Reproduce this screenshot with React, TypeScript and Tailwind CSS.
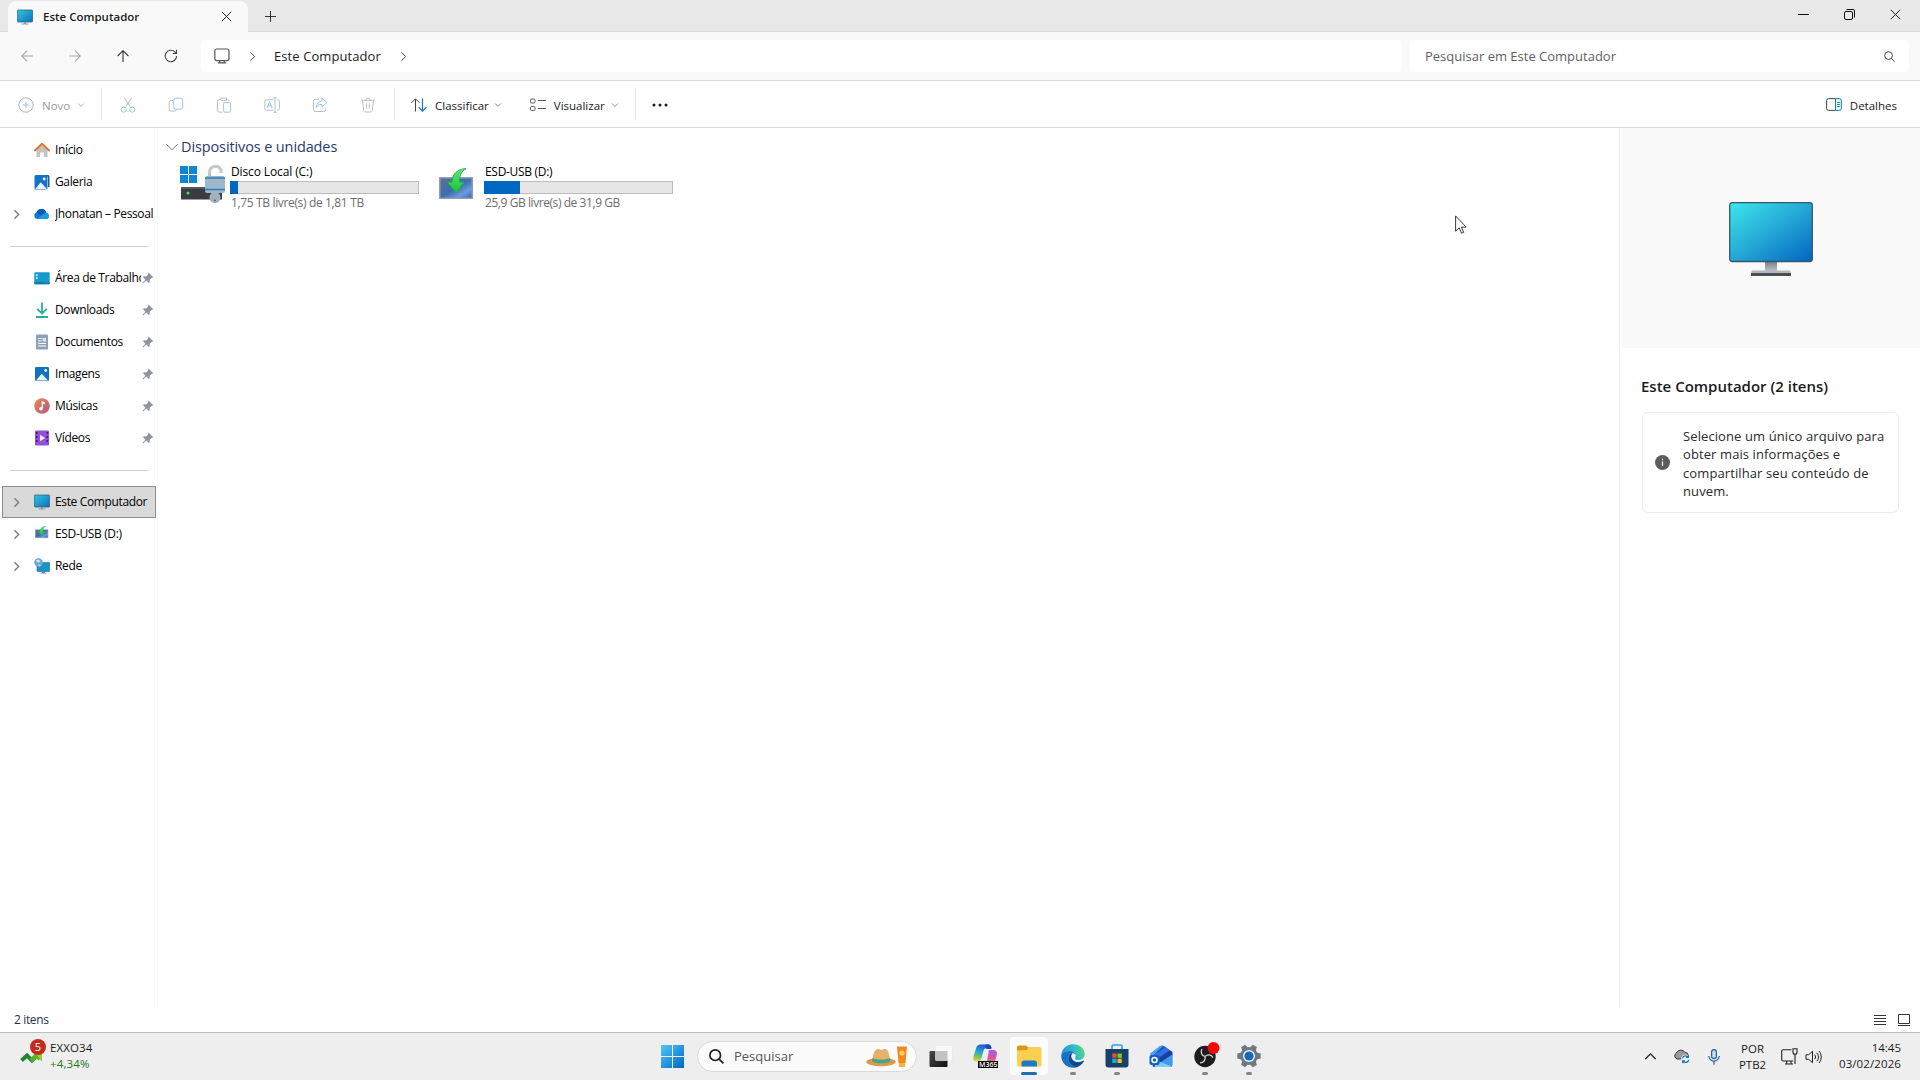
import type { ReactNode } from 'react'

interface IconProps {
  className?: string
}

interface Drive {
  name: string
  free: string
  fill: number
  nameClass: string
  freeClass: string
  icon: ReactNode
}

interface NavItem {
  label: string
  icon: ReactNode
  chevron?: boolean
  pinned?: boolean
  selected?: boolean
}

export default function App() {
  return (
    <div className="relative flex h-[1080px] w-[1920px] flex-col overflow-hidden bg-white font-['Open_Sans','Noto_Sans',sans-serif] text-xs text-[#1b1b1b]">
      <TitleBar />
      <NavBar />
      <CommandBar />
      <div className="flex min-h-0 flex-1">
        <Sidebar />
        <Drives />
        <DetailsPane />
      </div>
      <StatusBar />
      <Taskbar />
      <Cursor className="absolute left-[1455px] top-[215px] h-5 w-3" />
    </div>
  )
}

function TitleBar() {
  return (
    <header className="flex h-8 shrink-0 items-end border-b border-[#d9d9d9] bg-[#e8e8e8]">
      <div className="-mb-px ml-2 flex h-[31px] w-60 items-center rounded-t-lg bg-[#f9f9f9] pl-[9px] pr-4">
        <MonitorIcon className="h-4 w-4" />
        <span className="ml-[10px] text-[11.5px] font-semibold">Este Computador</span>
        <CloseIcon className="ml-auto h-[11px] w-[11px]" />
      </div>
      <svg viewBox="0 0 11 11" className="mb-[9px] ml-[17px] h-[11px] w-[11px]" fill="none" stroke="#333">
        <path d="M5.5 0v11M0 5.5h11" />
      </svg>
      <div className="mb-[11px] ml-auto flex items-center gap-[35px] pr-[19px]">
        <svg viewBox="0 0 11 11" className="h-[11px] w-[11px]" fill="none" stroke="#111">
          <path d="M0 5.5h11" />
        </svg>
        <svg viewBox="0 0 11 11" className="h-[11px] w-[11px]" fill="none" stroke="#111">
          <rect x="0.5" y="2.5" width="8" height="8" rx="1.5" />
          <path d="M2.5 0.5H9a1.5 1.5 0 0 1 1.5 1.5v6.5" />
        </svg>
        <CloseIcon className="h-[11px] w-[11px]" />
      </div>
    </header>
  )
}

function NavBar() {
  return (
    <div className="flex h-[49px] shrink-0 items-center border-b border-[#d9d9d9] bg-[#f9f9f9] pl-[3px] pr-[11px]">
      <NavArrow color="#a8a8a8" className="" />
      <NavArrow color="#a8a8a8" className="rotate-180" />
      <NavArrow color="#333" className="rotate-90" />
      <div className="flex w-12 justify-center">
        <svg viewBox="0 0 14 14" className="h-[14px] w-[14px]" fill="none" stroke="#444" strokeWidth="1.1">
          <path d="M12.6 7a5.7 5.7 0 1 1-1.7-4.1L12.3 4.4M12.5 0.8v3.7H8.8" />
        </svg>
      </div>
      <div className="ml-[6px] flex h-8 w-[1201px] items-center rounded bg-white pl-[13px]">
        <svg viewBox="0 0 16 16" className="h-4 w-4" fill="none" stroke="#555" strokeWidth="1.2">
          <rect x="0.8" y="1" width="14.2" height="11.6" rx="2" />
          <path d="M5.7 12.6v2M10.2 12.6v2M3.8 14.9h8.4" />
        </svg>
        <Chevron className="ml-[18px] h-[9px] w-[9px] -rotate-90" color="#444" />
        <span className="ml-[17px] pt-[2px] text-[13px] tracking-[0.08px]">Este Computador</span>
        <Chevron className="ml-[18px] h-[9px] w-[9px] -rotate-90" color="#444" />
      </div>
      <div className="ml-2 flex h-8 w-[499px] items-center justify-between rounded bg-white pl-[15px] pr-[14px] text-[#616161]">
        <span className="pt-[2px] text-[13px]">Pesquisar em Este Computador</span>
        <SearchIcon className="h-[11px] w-[11px]" color="#444" width={1} />
      </div>
    </div>
  )
}

function NavArrow({ color, className }: { color: string; className: string }) {
  return (
    <div className="flex w-12 justify-center">
      <svg viewBox="0 0 12 12" className={`h-3 w-3 ${className}`} fill="none" stroke={color} strokeWidth="1.1">
        <path d="M12 6H0.7M6 0.6L0.7 6L6 11.4" />
      </svg>
    </div>
  )
}

function CommandBar() {
  return (
    <div className="flex h-[47px] shrink-0 items-center border-b border-[#d9d9d9] bg-white pt-[2px]">
      <div className="flex w-[101px] items-center pl-[18px] text-[#9b9b9b]">
        <svg viewBox="0 0 16 16" className="h-4 w-4" fill="none">
          <circle cx="8" cy="8" r="7.2" stroke="#b3b3b3" />
          <path d="M8 4.5v7M4.5 8h7" stroke="#9cc3e6" />
        </svg>
        <span className="ml-2 pt-[2px] text-[11.5px]">Novo</span>
        <Chevron className="ml-[8px] h-[6px] w-[6px]" color="#b0b0b0" />
      </div>
      <Divider />
      <div className="ml-[2px] flex">
        <Tool>
          <path d="M4.2 0.6L10.8 10.8M11.8 0.6L5.2 10.8" stroke="#bdbdbd" />
          <circle cx="3.7" cy="12.6" r="2.6" stroke="#9cc3e6" />
          <circle cx="12.3" cy="12.6" r="2.6" stroke="#9cc3e6" />
        </Tool>
        <Tool>
          <path d="M5 3.5H3.2a2 2 0 0 0-2 2v6.6a2 2 0 0 0 2 2h3.6a2 2 0 0 0 1.7-1.2" stroke="#bdbdbd" />
          <rect x="5.7" y="1.2" width="9" height="11" rx="2" stroke="#9cc3e6" />
        </Tool>
        <Tool>
          <path d="M5 2.5H3.2a1.8 1.8 0 0 0-1.8 1.8v9a1.8 1.8 0 0 0 1.8 1.8h3M10.5 2.5h.8a1.8 1.8 0 0 1 1.8 1.2M5 1h5.5v2.6H5z" stroke="#bdbdbd" />
          <rect x="7.6" y="5.4" width="7" height="9.8" rx="1.5" stroke="#9cc3e6" />
        </Tool>
        <Tool>
          <path d="M9 2.8H2.6A1.8 1.8 0 0 0 .8 4.6v6.8a1.8 1.8 0 0 0 1.8 1.8H9M13 2.8h.6a1.8 1.8 0 0 1 1.8 1.8v6.8a1.8 1.8 0 0 1-1.8 1.8H13" stroke="#bdbdbd" />
          <path d="M11 .8v14.4M9.4.8h3.2M9.4 15.2h3.2M3 11l2.6-6.4L8.2 11M4 9h3.3" stroke="#9cc3e6" />
        </Tool>
        <Tool>
          <path d="M7 2.3H3.4a2 2 0 0 0-2 2v8.2a2 2 0 0 0 2 2h8.4a2 2 0 0 0 2-2v-1.2" stroke="#bdbdbd" />
          <path d="M10 1.2l5 4.3-5 4.3V7.5c-2.7-.2-4.3.8-5.7 2.8.3-3.2 2.2-5.9 5.7-6.4z" stroke="#9cc3e6" strokeLinejoin="round" />
        </Tool>
        <Tool>
          <path d="M1 3.3h14M5.9 3.3a2.1 2.1 0 0 1 4.2 0M2.5 3.3l1.2 10.2a1.7 1.7 0 0 0 1.7 1.5h5.2a1.7 1.7 0 0 0 1.7-1.5l1.2-10.2M6.6 6.5v5M9.4 6.5v5" stroke="#bdbdbd" />
        </Tool>
      </div>
      <Divider className="ml-[2px]" />
      <svg viewBox="0 0 16 14" className="ml-4 h-[14px] w-4" fill="none">
        <path d="M4.5 13.5V1M0.5 4.8L4.5.8l4 4" stroke="#444" />
        <path d="M11.5.5V13M7.5 9.2l4 4 4-4" stroke="#1874b8" strokeWidth="1.2" />
      </svg>
      <span className="ml-2 pt-[2px] text-[11.5px]">Classificar</span>
      <Chevron className="ml-[6px] h-[6px] w-[6px]" color="#8a8a8a" />
      <svg viewBox="0 0 16 14" className="ml-[29px] h-[14px] w-4" fill="none" stroke="#555">
        <rect x="0.5" y="1" width="4.5" height="4" rx="1.2" />
        <rect x="0.5" y="8.5" width="4.5" height="4" rx="1.2" />
        <path d="M8 2.5h8M8 10.5h8" />
      </svg>
      <span className="ml-2 pt-[2px] text-[11.5px]">Visualizar</span>
      <Chevron className="ml-[7px] h-[6px] w-[6px]" color="#8a8a8a" />
      <Divider className="ml-[17px]" />
      <svg viewBox="0 0 16 4" className="ml-4 h-1 w-4" fill="#1b1b1b">
        <circle cx="2" cy="2" r="1.5" />
        <circle cx="8" cy="2" r="1.5" />
        <circle cx="14" cy="2" r="1.5" />
      </svg>
      <div className="ml-auto flex items-center pr-[23px]">
        <svg viewBox="0 0 16 13" className="h-[13px] w-4" fill="none">
          <path d="M9.5.6H2.6a2 2 0 0 0-2 2v7.8a2 2 0 0 0 2 2h6.9z" stroke="#444" />
          <path d="M9.5.6h3.9a2 2 0 0 1 2 2v7.8a2 2 0 0 1-2 2H9.5z" fill="#e3f3fb" stroke="#1a7fa8" />
          <path d="M11.2 4.5h2.6M11.2 6.5h2.6M11.2 8.5h2.6" stroke="#1a7fa8" />
        </svg>
        <span className="ml-[8px] pt-[2px] text-[11.5px]">Detalhes</span>
      </div>
    </div>
  )
}

function Tool({ children }: { children: ReactNode }) {
  return (
    <div className="flex w-12 justify-center">
      <svg viewBox="0 0 16 16" className="h-4 w-4" fill="none">
        {children}
      </svg>
    </div>
  )
}

function Divider({ className = '' }: IconProps) {
  return <div className={`-mt-[2px] h-8 w-px shrink-0 bg-[#e5e5e5] ${className}`} />
}

const places: NavItem[] = [
  { label: 'Início', icon: <HomeIcon /> },
  { label: 'Galeria', icon: <GalleryIcon /> },
  { label: 'Jhonatan – Pessoal', icon: <OneDriveIcon />, chevron: true },
]

const pinned: NavItem[] = [
  { label: 'Área de Trabalho', icon: <DesktopIcon />, pinned: true },
  { label: 'Downloads', icon: <DownloadIcon />, pinned: true },
  { label: 'Documentos', icon: <DocumentIcon />, pinned: true },
  { label: 'Imagens', icon: <PictureIcon />, pinned: true },
  { label: 'Músicas', icon: <MusicIcon />, pinned: true },
  { label: 'Vídeos', icon: <VideoIcon />, pinned: true },
]

const devices: NavItem[] = [
  { label: 'Este Computador', icon: <MonitorIcon className="h-4 w-4" />, chevron: true, selected: true },
  { label: 'ESD-USB (D:)', icon: <UsbIcon className="-mt-[2px] h-[14px] w-[14px]" />, chevron: true },
  { label: 'Rede', icon: <NetworkFolderIcon />, chevron: true },
]

function Sidebar() {
  return (
    <nav className="w-[158px] shrink-0 border-r border-[#f6f6f6] pt-[6px] text-black">
      {places.map((item) => <NavRow key={item.label} item={item} />)}
      <Separator />
      {pinned.map((item) => <NavRow key={item.label} item={item} />)}
      <Separator />
      {devices.map((item) => <NavRow key={item.label} item={item} />)}
    </nav>
  )
}

function Separator() {
  return (
    <div className="flex h-8 items-center pl-[10px]">
      <div className="h-px w-[138px] bg-[#cfcfcf]" />
    </div>
  )
}

function NavRow({ item }: { item: NavItem }) {
  return (
    <div
      className={`ml-[2px] flex h-8 w-[154px] items-center border ${
        item.selected ? 'border-[#8c8c8c] bg-[#d9d9d9]' : 'border-transparent'
      }`}
    >
      <div className="flex w-[31px] shrink-0 pl-[9px]">
        {item.chevron && <Chevron className="h-[9px] w-[9px] -rotate-90" color="#7d7d7d" width={1.4} />}
      </div>
      <div className="flex w-4 shrink-0 justify-center">{item.icon}</div>
      <div className={`ml-[5px] overflow-hidden whitespace-nowrap ${item.pinned ? 'w-[86px]' : 'w-[100px]'}`}>
        <span className="text-xs tracking-[-0.36px]">{item.label}</span>
      </div>
      {item.pinned && <PinIcon />}
    </div>
  )
}

const drives: Drive[] = [
  {
    name: 'Disco Local (C:)',
    free: '1,75 TB livre(s) de 1,81 TB',
    fill: 8,
    nameClass: 'tracking-[-0.12px]',
    freeClass: 'tracking-[-0.35px]',
    icon: <LocalDiskIcon />,
  },
  {
    name: 'ESD-USB (D:)',
    free: '25,9 GB livre(s) de 31,9 GB',
    fill: 36,
    nameClass: 'tracking-[-0.3px]',
    freeClass: 'tracking-[-0.43px]',
    icon: <UsbIcon className="ml-[5px] mt-1 h-9 w-9" />,
  },
]

function Drives() {
  return (
    <main className="flex-1 pl-2 pt-[8px]">
      <div className="flex h-[22px] items-center">
        <Chevron className="h-3 w-3" color="#777" />
        <span className="ml-[3px] text-[14.5px] tracking-[-0.12px] text-[#2b3a6b]">Dispositivos e unidades</span>
      </div>
      <div className="flex pl-[14px] pt-[5px]">
        {drives.map((drive) => (
          <div key={drive.name} className="flex w-[254px]">
            <div className="flex w-[50px] shrink-0 items-start pt-px">{drive.icon}</div>
            <div className="w-[189px]">
              <div className="flex h-[18px] items-center pb-px pl-px">
                <span className={`text-xs text-black ${drive.nameClass}`}>{drive.name}</span>
              </div>
              <div className="h-[13px] border border-[#bcbcbc] bg-[#e6e6e6]">
                <div className="-my-px -ml-px h-[13px] bg-[#0067c0]" style={{ width: drive.fill }} />
              </div>
              <div className="flex h-[18px] items-center pl-px">
                <span className={`text-xs text-[#6d6d6d] ${drive.freeClass}`}>{drive.free}</span>
              </div>
            </div>
          </div>
        ))}
      </div>
    </main>
  )
}

function DetailsPane() {
  return (
    <aside className="flex w-[301px] shrink-0 flex-col border-l border-[#f0f0f0]">
      <div className="ml-[2px] flex h-[220px] justify-center bg-[#f9f9f9] pt-[74px]">
        <BigMonitor />
      </div>
      <h2 className="mt-[26px] h-6 pl-[21px] text-[15px] font-semibold leading-6">Este Computador (2 itens)</h2>
      <div className="ml-[22px] mt-[14px] flex h-[101px] w-[257px] items-center rounded-md border border-[#ececec] pl-3">
        <InfoIcon />
        <p className="ml-[13px] pt-[2px] text-[13px] leading-[18.5px] tracking-[0.1px] text-[#2a2a2a]">
          Selecione um único arquivo para
          <br />
          obter mais informações e
          <br />
          compartilhar seu conteúdo de
          <br />
          nuvem.
        </p>
      </div>
    </aside>
  )
}

function StatusBar() {
  return (
    <div className="flex h-6 shrink-0 items-center justify-between pl-[14px] pr-[10px]">
      <span className="text-xs tracking-[-0.36px] text-[#1f3350]">2 itens</span>
      <div className="flex gap-3">
        <svg viewBox="0 0 12 12" className="h-3 w-3" stroke="#333">
          <path d="M0 1.5h12M0 4.5h12M0 7.5h12M0 10.5h12" />
        </svg>
        <svg viewBox="0 0 12 12" className="h-3 w-3" fill="none" stroke="#333">
          <path d="M.5.5h11v9H.5zM0 11.5h12" />
        </svg>
      </div>
    </div>
  )
}

function Taskbar() {
  return (
    <footer className="flex h-12 shrink-0 items-center border-t border-[#bdbdbd] bg-[#eeeeee]">
      <div className="flex w-[661px] items-center pb-[2px] pl-5">
        <StockIcon />
        <div className="ml-1 flex flex-col leading-4">
          <span className="text-[11.5px] tracking-[0.1px]">EXXO34</span>
          <span className="text-[11.5px] tracking-[0.15px] text-[#1d7a1d]">+4,34%</span>
        </div>
      </div>
      <StartIcon />
      <div className="ml-[13px] flex h-[31px] w-[220px] items-center rounded-full border border-[#dadada] bg-[#fbfbfb] pl-[11px] pr-2">
        <SearchIcon className="h-[15px] w-[15px]" color="#222" width={1.7} />
        <span className="ml-[10px] text-[13px] text-[#555]">Pesquisar</span>
        <HatIcon />
      </div>
      <div className="-mt-px ml-[2px] flex">
        <TaskItem><TaskViewIcon /></TaskItem>
        <TaskItem><CopilotIcon /></TaskItem>
        <TaskItem state="active"><ExplorerIcon /></TaskItem>
        <TaskItem state="running"><EdgeIcon /></TaskItem>
        <TaskItem state="running"><StoreIcon /></TaskItem>
        <TaskItem><OutlookIcon /></TaskItem>
        <TaskItem state="running"><ObsIcon /></TaskItem>
        <TaskItem state="running"><SettingsIcon /></TaskItem>
      </div>
      <Tray />
    </footer>
  )
}

function TaskItem({ children, state }: { children: ReactNode; state?: 'active' | 'running' }) {
  return (
    <div className="flex w-11 shrink-0 justify-center">
      <div className={`relative flex h-[38px] w-[38px] items-center justify-center rounded ${state === 'active' ? 'bg-[#fbfbfb]' : ''}`}>
        {children}
        {state === 'active' && <div className="absolute bottom-0 h-[3px] w-4 rounded-full bg-[#1c6fb5]" />}
        {state === 'running' && <div className="absolute bottom-0 h-[3px] w-[6px] rounded-full bg-[#868686]" />}
      </div>
    </div>
  )
}

function Tray() {
  return (
    <div className="ml-auto flex items-center pr-[19px]">
      <Chevron className="h-[11px] w-[11px] rotate-180" color="#222" width={1.3} />
      <svg viewBox="0 0 17 15" className="ml-[17px] h-[15px] w-[17px]">
        <path d="M4 10a3.3 3.3 0 0 1-.6-6A5 5 0 0 1 12 3.3a3.6 3.6 0 0 1 3.3 3L9 10z" fill="#9a9a9a" stroke="#333" />
        <circle cx="12.5" cy="10" r="4.5" fill="#eee" />
        <path d="M9.3 9.3a3.3 3.3 0 0 1 5.8-1.2M15.4 6v2.4H13M15.7 11a3.3 3.3 0 0 1-5.8 1.2M9.6 14.3v-2.4H12" fill="none" stroke="#0f7ac2" strokeWidth="1.2" />
      </svg>
      <svg viewBox="0 0 12 16" className="ml-[18px] h-4 w-3" fill="none" stroke="#2a5d9c" strokeWidth="1.2">
        <rect x="3.6" y="0.7" width="4.8" height="9" rx="2.4" fill="#c9def0" />
        <path d="M.8 7a5.2 5.2 0 0 0 10.4 0M6 12.2v3.5" />
      </svg>
      <div className="ml-[19px] flex w-[27px] flex-col items-center leading-4">
        <span className="text-[11.5px]">POR</span>
        <span className="text-[11.5px]">PTB2</span>
      </div>
      <svg viewBox="0 0 17 17" className="ml-[15px] h-[17px] w-[17px]" fill="none" stroke="#222" strokeWidth="1.1">
        <path d="M10.5 1.7H2.2A1.5 1.5 0 0 0 .7 3.2v8.3A1.5 1.5 0 0 0 2.2 13h10M4 16h8M5.7 13v3M10 13v3M12 .7h4v3.5a2 2 0 0 1-4 0zM14 6v10" />
      </svg>
      <svg viewBox="0 0 18 16" className="ml-[7px] h-4 w-[18px]" fill="none" stroke="#222">
        <path d="M1 5.7h2.7L7.5 2.3v11.4L3.7 10.3H1zM9.7 5.7a3.5 3.5 0 0 1 0 4.6M11.8 3.8a6 6 0 0 1 0 8.4M14 2a9 9 0 0 1 0 12" />
      </svg>
      <div className="ml-4 flex w-[62px] flex-col items-end pb-[2px] leading-4">
        <span className="text-[11.5px]">14:45</span>
        <span className="text-[11.5px] tracking-[0.1px]">03/02/2026</span>
      </div>
    </div>
  )
}

function Chevron({ className, color, width = 1 }: { className: string; color: string; width?: number }) {
  return (
    <svg viewBox="0 0 10 10" className={`shrink-0 overflow-visible ${className}`} fill="none" stroke={color} strokeWidth={width}>
      <path d="M0.3 2.7L5 7.4L9.7 2.7" vectorEffect="non-scaling-stroke" />
    </svg>
  )
}

function CloseIcon({ className }: IconProps) {
  return (
    <svg viewBox="0 0 11 11" className={className} fill="none" stroke="#222">
      <path d="M0.8 0.8l9.4 9.4M10.2 0.8L0.8 10.2" />
    </svg>
  )
}

function SearchIcon({ className, color, width }: { className: string; color: string; width: number }) {
  return (
    <svg viewBox="0 0 15 15" className={className} fill="none" stroke={color}>
      <g strokeWidth={width}>
        <circle cx="6.2" cy="6.2" r="5.3" vectorEffect="non-scaling-stroke" />
        <path d="M10.1 10.1l4.3 4.3" vectorEffect="non-scaling-stroke" />
      </g>
    </svg>
  )
}

function MonitorIcon({ className }: IconProps) {
  return (
    <svg viewBox="0 0 16 16" className={className}>
      <defs>
        <linearGradient id="mon" x1="0" y1="0" x2="1" y2="1">
          <stop offset="0" stopColor="#2fc6e2" />
          <stop offset="1" stopColor="#0f6fb8" />
        </linearGradient>
      </defs>
      <rect x="0.4" y="1" width="15.2" height="12" rx="0.8" fill="url(#mon)" stroke="#245a78" strokeWidth="0.7" />
      <path d="M7 13.2h2v1.3H7zM4.5 14.5h7v1h-7z" fill="#8a97a3" />
    </svg>
  )
}

function BigMonitor() {
  return (
    <svg viewBox="0 0 84 75" className="h-[75px] w-[84px]">
      <defs>
        <linearGradient id="screen" x1="0" y1="0" x2="1" y2="1">
          <stop offset="0" stopColor="#3ce6ea" />
          <stop offset="0.5" stopColor="#24a8d6" />
          <stop offset="1" stopColor="#0264c0" />
        </linearGradient>
        <linearGradient id="stand" x1="0" y1="0" x2="0" y2="1">
          <stop offset="0" stopColor="#7d858d" />
          <stop offset="1" stopColor="#b9c0c7" />
        </linearGradient>
      </defs>
      <path d="M36 60h12v9H36z" fill="url(#stand)" />
      <path d="M23 68.500h38l1 2.500H22z" fill="#b4b9be" />
      <path d="M22 71h40v3H22z" fill="#4a4e53" />
      <rect x="0.7" y="0.7" width="82.600" height="58.800" rx="2.500" fill="url(#screen)" stroke="#37566b" strokeWidth="1.300" />
    </svg>
  )
}

function HomeIcon() {
  return (
    <svg viewBox="0 0 16 16" className="h-4 w-4">
      <path d="M2.5 7.5L8 3l5.5 4.5V15H9.8v-4.5H6.2V15H2.5z" fill="#c3c3c6" />
      <path d="M.9 8.4L8 1.8l7.1 6.6" fill="none" stroke="#dd7a26" strokeWidth="2" strokeLinecap="round" strokeLinejoin="round" />
    </svg>
  )
}

function GalleryIcon() {
  return (
    <svg viewBox="0 0 16 16" className="h-4 w-4">
      <path d="M4 1h10a1.5 1.5 0 0 1 1.5 1.5V13H14V2.5H4z" fill="#1a5fa0" />
      <rect x="0.5" y="1" width="13" height="14.5" rx="1.5" fill="#1473c5" />
      <path d="M1.2 15l5.6-6.8L12.8 15z" fill="#eaf6ff" />
      <circle cx="10.2" cy="5" r="1.4" fill="#fff" />
    </svg>
  )
}

function OneDriveIcon() {
  return (
    <svg viewBox="0 0 16 16" className="h-4 w-4">
      <path d="M3.6 13A3.5 3.5 0 0 1 2.8 6.2 5 5 0 0 1 12.3 6.8 3.2 3.2 0 0 1 12.7 13z" fill="#0f78d4" />
      <path d="M2.8 6.2a5 5 0 0 1 9.5.6L6 9.8z" fill="#0a5cb0" />
      <path d="M3 12.7l6.2-4.5a3.2 3.2 0 0 1 3-1.4 3.2 3.2 0 0 1 .5 6.2H3.6z" fill="#1f97e4" />
    </svg>
  )
}

function DesktopIcon() {
  return (
    <svg viewBox="0 0 16 16" className="h-4 w-4">
      <rect x="0.3" y="2.3" width="15.4" height="11.9" rx="1" fill="#159bcb" />
      <path d="M0.3 12h15.4v1.2a1 1 0 0 1-1 1H1.3a1 1 0 0 1-1-1z" fill="#0d7ca8" />
      <path d="M2 4.5h1.6v1.5H2zM2 7.5h1.6V9H2zM10.5 12.8h1M12.5 12.8h1" fill="#c9f2ff" stroke="#c9f2ff" strokeWidth="0.3" />
    </svg>
  )
}

function DownloadIcon() {
  return (
    <svg viewBox="0 0 16 16" className="h-4 w-4" fill="none" stroke="#2fae8f" strokeWidth="1.8">
      <path d="M8 .5v11M3.2 6.8L8 11.5l4.8-4.7M2 15h12" />
    </svg>
  )
}

function DocumentIcon() {
  return (
    <svg viewBox="0 0 16 16" className="h-4 w-4">
      <rect x="2" y="0.5" width="12" height="15" rx="1" fill="#8ea1b8" />
      <path d="M4 4.5h3.5M4 7h3.5M4 9.5h8M4 12h8" stroke="#fff" />
      <rect x="8.6" y="4" width="3.4" height="3.5" fill="#dfe8f2" />
    </svg>
  )
}

function PictureIcon() {
  return (
    <svg viewBox="0 0 16 16" className="h-4 w-4">
      <rect x="1" y="1" width="14" height="14" rx="1.2" fill="#1173bd" />
      <path d="M2 14.5l5.700-6.800 6.300 6.800z" fill="#eaf6ff" />
      <circle cx="11.7" cy="4.5" r="1.4" fill="#fff" />
    </svg>
  )
}

function MusicIcon() {
  return (
    <svg viewBox="0 0 16 16" className="h-4 w-4">
      <defs>
        <linearGradient id="mus" x1="0" y1="0" x2="1" y2="1">
          <stop offset="0" stopColor="#e58a57" />
          <stop offset="1" stopColor="#b9567f" />
        </linearGradient>
      </defs>
      <circle cx="8" cy="8" r="7.8" fill="url(#mus)" />
      <path d="M8.300 3.500v7" stroke="#fff" strokeWidth="1.2" />
      <circle cx="6.9" cy="10.8" r="1.8" fill="#fff" />
      <path d="M8 3.300l2.800 1v1.900L8 5.300z" fill="#fff" />
    </svg>
  )
}

function VideoIcon() {
  return (
    <svg viewBox="0 0 16 16" className="h-4 w-4">
      <rect x="1" y="0.5" width="14" height="15" rx="1.2" fill="#9150d6" />
      <path d="M2.800 2v12M13.200 2v12" stroke="#41207a" strokeWidth="1.7" strokeDasharray="2 2" />
      <path d="M6 4.800l5.200 3.200L6 11.200z" fill="#f1e4ff" />
    </svg>
  )
}

function NetworkFolderIcon() {
  return (
    <svg viewBox="0 0 16 16" className="h-4 w-4">
      <rect x="3" y="4.5" width="12.7" height="9" rx="0.7" fill="#1a94c8" stroke="#1c6a92" strokeWidth="0.6" />
      <path d="M8 13.500h3v1.200h1.500v.8h-6v-.8H8z" fill="#5c88a5" />
      <circle cx="4.5" cy="4.5" r="4.2" fill="#6fa6cf" />
      <path d="M2 2.500c2-1.500 3-.5 4.500.5L4 5zM4 6.500l3 .5-1.500 1.500z" fill="#d4e8f5" />
    </svg>
  )
}

function UsbIcon({ className }: IconProps) {
  return (
    <svg viewBox="0 0 36 36" className={className}>
      <defs>
        <linearGradient id="usb" x1="0" y1="0" x2="1" y2="1">
          <stop offset="0" stopColor="#5b7391" />
          <stop offset="0.5" stopColor="#3f6cb0" />
          <stop offset="0.75" stopColor="#6a9be0" />
          <stop offset="1" stopColor="#2f62b0" />
        </linearGradient>
        <linearGradient id="arrow" x1="0" y1="0" x2="0" y2="1">
          <stop offset="0" stopColor="#59e884" />
          <stop offset="1" stopColor="#17c22e" />
        </linearGradient>
      </defs>
      <rect x="0.8" y="9.8" width="32.5" height="20.5" fill="url(#usb)" stroke="#8e9db0" strokeWidth="1.500" />
      <path d="M27 .5C18.500 1 13 6 13 14H8l9.500 11L25 14h-4.500C20.500 8 22 3.500 27 .5z" fill="url(#arrow)" stroke="#23a33f" strokeWidth="0.8" />
    </svg>
  )
}

function LocalDiskIcon() {
  return (
    <svg viewBox="0 0 46 40" className="h-10 w-[46px]">
      <path d="M0 2h8v8H0zM9 2h8v8H9zM0 11h8v8H0zM9 11h8v8H9z" fill="#0f87d3" />
      <path d="M1 23h41v12.500H1z" fill="#3a3c40" />
      <path d="M1 23h41v2H1z" fill="#55585d" />
      <circle cx="8" cy="29" r="1.5" fill="#3fe06a" />
      <path d="M29.500 13V8a6 6 0 0 1 11.500-2v3" fill="none" stroke="#c3c8cd" strokeWidth="3" />
      <rect x="25" y="12" width="20" height="17" rx="2" fill="#a7b4c2" />
      <path d="M25 15.500h20v10H25z" fill="#9fb6cd" />
      <path d="M25 14h20M25 25.500h20" stroke="#2a80c8" strokeWidth="1.500" />
      <circle cx="35" cy="33.500" r="5.500" fill="#a3b0c0" />
      <circle cx="35" cy="36.500" r="1" fill="#5b6b80" />
    </svg>
  )
}

function PinIcon() {
  return (
    <svg viewBox="0 0 12 12" className="ml-px h-3 w-3 shrink-0" fill="#8b949c">
      <path d="M6.8.8L11.2 5.2 10 6 9.5 5.900 7.600 8l.1 2.200-.9.8L4.200 8.500 1.200 11.500.5 10.800 3.500 7.800 1 5.200l.8-.9L4 4.400 6.100 2.500 6 2z" />
    </svg>
  )
}

function InfoIcon() {
  return (
    <svg viewBox="0 0 16 16" className="h-[15px] w-[15px] shrink-0">
      <circle cx="8" cy="8" r="8" fill="#5d5d5d" />
      <path d="M8 6.800v5M8 4v1.500" stroke="#fff" strokeWidth="1.2" />
    </svg>
  )
}

function Cursor({ className }: IconProps) {
  return (
    <svg viewBox="0 0 12 20" className={className}>
      <path d="M.6.9v15.300l3.600-3.400 2.300 5.400 2.200-.9-2.300-5.200h4.800z" fill="#fff" stroke="#222" strokeWidth="0.9" />
    </svg>
  )
}

function StockIcon() {
  return (
    <div className="relative -mt-[7px] h-[26px] w-[26px]">
      <svg viewBox="0 0 26 26" className="h-[26px] w-[26px]" fill="none" strokeWidth="4">
        <path d="M1.500 21.500l5.500-5 5 5 3-3" stroke="#1f8436" />
        <path d="M11 21.500l5-5 4 3.500" stroke="#5fb21f" />
        <path d="M16 15h6v8z" fill="#8fd130" />
      </svg>
      <div className="absolute left-[10px] top-0 flex h-4 w-4 items-center justify-center rounded-full bg-[#c42b1c] text-[11px] text-white">5</div>
    </div>
  )
}

function StartIcon() {
  return (
    <svg viewBox="0 0 23 23" className="h-[23px] w-[23px] shrink-0">
      <defs>
        <linearGradient id="win" x1="0" y1="0" x2="1" y2="1">
          <stop offset="0" stopColor="#4fc8f5" />
          <stop offset="1" stopColor="#0067c4" />
        </linearGradient>
      </defs>
      <path d="M0 0h11v11H0zM12 0h11v11H12zM0 12h11v11H0zM12 12h11v11H12z" fill="url(#win)" />
    </svg>
  )
}

function HatIcon() {
  return (
    <svg viewBox="0 0 42 22" className="ml-auto h-[22px] w-[42px]">
      <ellipse cx="15" cy="16" rx="14.8" ry="4.2" fill="#d99a4c" />
      <path d="M6.500 15C7 7 9 3 12 3c2 0 2 .8 3.500.8S17.500 3 19 3c3 0 4.500 4.500 5 12-4 2.500-14 2.500-17.500 0z" fill="#e6b26a" />
      <path d="M6.500 12c5 2 12.500 2 17.300 0l.5 3.500c-5 2.500-13.300 2.500-18.200 0z" fill="#44a58a" />
      <path d="M31 .5h10l-1.500 16.500h-7z" fill="#f08a1f" />
      <path d="M32.800 17h6.400v4h-6.400z" fill="#f7b24a" />
      <circle cx="36" cy="7" r="2.6" fill="#ffd45c" />
    </svg>
  )
}

function TaskViewIcon() {
  return (
    <svg viewBox="0 0 24 24" className="h-6 w-6">
      <defs>
        <linearGradient id="tv" x1="0" y1="0" x2="1" y2="1">
          <stop offset="0" stopColor="#4a4a4a" />
          <stop offset="1" stopColor="#111" />
        </linearGradient>
      </defs>
      <rect x="0.5" y="7" width="18" height="16" rx="1" fill="url(#tv)" />
      <rect x="6.5" y="1.5" width="17" height="15" rx="1" fill="#f9f9f9" stroke="#e2e2e2" strokeWidth="0.5" />
      <path d="M6.500 7h12v9.500h-12z" fill="#c2c2c2" />
    </svg>
  )
}

function CopilotIcon() {
  return (
    <div className="relative flex h-6 w-6">
      <svg viewBox="0 0 24 24" className="h-6 w-6">
        <defs>
          <linearGradient id="cpl" x1="0.6" y1="0" x2="0.3" y2="1">
            <stop offset="0" stopColor="#1b55d0" />
            <stop offset="0.45" stopColor="#22a2e0" />
            <stop offset="0.7" stopColor="#5cc46a" />
            <stop offset="1" stopColor="#e6d43a" />
          </linearGradient>
          <linearGradient id="cpr" x1="0.4" y1="0" x2="0.5" y2="1">
            <stop offset="0" stopColor="#a35be8" />
            <stop offset="0.6" stopColor="#d9559f" />
            <stop offset="1" stopColor="#f2894a" />
          </linearGradient>
        </defs>
        <path d="M8 .5h7.500c2 0 2.500 1.500 3 3.500H14c-2 0-3 1-3.600 3L8.500 14c-.6 2-1.500 3.500-3.500 3.500H3c-2.500 0-3.400-2-2.600-5L3 4.500c1-3 2-4 5-4z" fill="url(#cpl)" />
        <path d="M12.500.5h3c2 0 2.500 1.500 3 4.500H14c-1.500 0-1.500-2-1.500-4.500z" fill="#1e48b8" />
        <path d="M16 6h4.500c2.800 0 4 2 3.200 5L22.500 16c-.5 2.500-2 3.500-4 3.500h-7c1.500 0 2-1 2.500-2.500z" fill="url(#cpr)" />
      </svg>
      <span className="absolute left-[5px] top-[17px] bg-black px-px text-[7px] font-semibold leading-[7px] text-white">M365</span>
    </div>
  )
}

function ExplorerIcon() {
  return (
    <svg viewBox="0 0 25 22" className="h-[22px] w-[25px]">
      <path d="M0 2A1.500 1.500 0 0 1 1.500.5H9L11.500 2.500h11A1.500 1.500 0 0 1 24 4v6H0z" fill="#d99a16" />
      <path d="M9.500 5L11.500 2.500H23A1.500 1.500 0 0 1 24.500 4v16a1.500 1.500 0 0 1-1.500 1.500H1.500A1.500 1.500 0 0 1 0 20V5.500z" fill="#fccf50" />
      <path d="M4.500 21.500V18A2.500 2.500 0 0 1 7 15.500h10.500A2.500 2.500 0 0 1 20 18v3.500z" fill="#1b7cc4" />
    </svg>
  )
}

function EdgeIcon() {
  return (
    <svg viewBox="0 0 24 24" className="h-6 w-6">
      <defs>
        <linearGradient id="edgeTop" x1="0" y1="0.5" x2="1" y2="0.3">
          <stop offset="0" stopColor="#1c8fdc" />
          <stop offset="0.6" stopColor="#2fc0c6" />
          <stop offset="1" stopColor="#5fd968" />
        </linearGradient>
      </defs>
      <path d="M.3 11C1 4.500 6 .2 12 .2c7 0 11.800 5 11.800 9.800 0 3.500-2.500 6-6 6-3 0-4.500-1.200-3.600-2.600C16 10.500 13.500 7 9 7 4.500 7 1.500 9 .3 11z" fill="url(#edgeTop)" />
      <path d="M.3 11C1.500 8.500 4.500 7 9 7c3.500 0 5.500 2 5.800 4-1-1.500-2-2-3.500-1.800C8 9.500 6.800 13 7.500 16c.8 3.500 3.500 6.500 7.500 7.400-1 .3-2 .4-3 .4C5 23.800-.3 18 .3 11z" fill="#1573c6" />
      <path d="M7.500 16c-.7-3 .5-6.500 3.800-6.800-1.300 2-1.500 4.300.2 6.300 2.500 3 7 3.300 10.500 1.300.8-.4 1.200.1.800.8-1.700 3-4.500 5.100-7.800 5.800-4-.9-6.700-3.900-7.500-7.400z" fill="#104a8e" />
    </svg>
  )
}

function StoreIcon() {
  return (
    <svg viewBox="0 0 24 24" className="h-6 w-6">
      <path d="M7 6V2.300A1.300 1.300 0 0 1 8.300 1h7.400A1.300 1.300 0 0 1 17 2.300V6" fill="none" stroke="#2ca7dd" strokeWidth="1.7" />
      <path d="M.5 5h23v15.500a3 3 0 0 1-3 3h-17a3 3 0 0 1-3-3z" fill="#17406b" />
      <path d="M7.300 9.500h4.300v4.300H7.300z" fill="#f1511b" />
      <path d="M12.500 9.500h4.300v4.300h-4.300z" fill="#80cc28" />
      <path d="M7.300 14.700h4.300V19H7.300z" fill="#1fa9ea" />
      <path d="M12.500 14.700h4.300V19h-4.300z" fill="#fbbc09" />
    </svg>
  )
}

function OutlookIcon() {
  return (
    <svg viewBox="0 0 24 24" className="h-6 w-6">
      <path d="M1.500 9.500L11 2.300c1.500-1 2.800-1 4.300 0l8 5.700v12.500a2.500 2.500 0 0 1-2.500 2.500H4z" fill="#2257c4" />
      <path d="M1.500 9.500L11 2.300l3-.6L3.500 12z" fill="#4aa3f5" />
      <path d="M3.500 12L17 3.500l3.500 2.500L6 16z" fill="#2f74e6" />
      <path d="M7 16.500l14-10 2.300 1.600v3.400L11 19z" fill="#1b3f9c" />
      <path d="M9 20L23.300 10.500v10a2.500 2.500 0 0 1-2.500 2.500H9z" fill="#3e9af0" />
      <path d="M6 17.500h4l12.500 4.800a2.500 2.500 0 0 1-1.700.7H6z" fill="#7ccbfa" />
      <rect x="0.5" y="11" width="10" height="10" rx="2" fill="#1360c4" />
      <circle cx="5.5" cy="16" r="2.5" fill="none" stroke="#fff" strokeWidth="1.500" />
    </svg>
  )
}

function ObsIcon() {
  return (
    <svg viewBox="0 0 26 26" className="h-[26px] w-[26px] overflow-visible">
      <circle cx="13" cy="13.500" r="10.700" fill="#1d1d1f" />
      <g fill="none" stroke="#d8d8d8" strokeWidth="1.300">
        <path d="M13 13.500c-3.500-1-4.800-4.500-3-7.500" />
        <path d="M13 13.500c-3.500-1-4.800-4.500-3-7.500" transform="rotate(120 13 13.5)" />
        <path d="M13 13.500c-3.500-1-4.800-4.500-3-7.500" transform="rotate(240 13 13.5)" />
      </g>
      <circle cx="21.500" cy="5" r="6" fill="#f90606" />
    </svg>
  )
}

function SettingsIcon() {
  return (
    <svg viewBox="0 0 24 24" className="h-6 w-6">
      <g fill="#6f7881">
        <circle cx="12" cy="12" r="9" />
        <path d="M9.600.3h4.800l1 4.700H8.600zM9.600 23.700h4.800l1-4.700H8.600z" transform="rotate(30 12 12)" />
        <path d="M9.600.3h4.800l1 4.700H8.600zM9.600 23.700h4.800l1-4.700H8.600z" transform="rotate(90 12 12)" />
        <path d="M9.600.3h4.800l1 4.700H8.600zM9.600 23.700h4.800l1-4.700H8.600z" transform="rotate(150 12 12)" />
      </g>
      <circle cx="12" cy="12" r="6" fill="#eef3f7" />
      <circle cx="12" cy="12" r="4.600" fill="#1668b8" />
    </svg>
  )
}
